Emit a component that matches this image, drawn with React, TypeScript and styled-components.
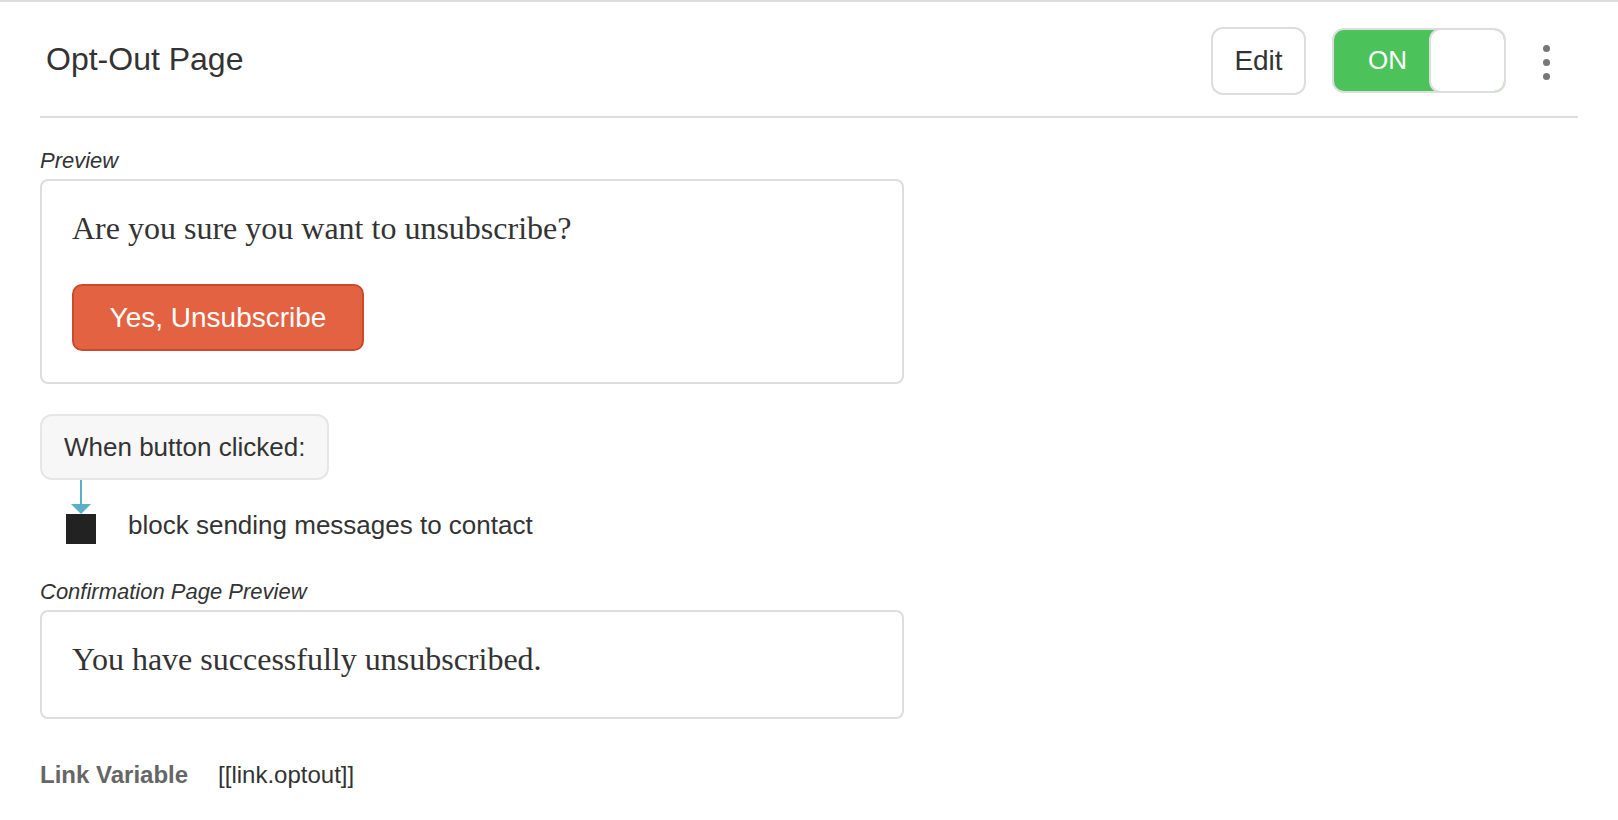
import styled, { createGlobalStyle } from 'styled-components'

const GlobalStyle = createGlobalStyle`
  body {
    margin: 0;
    background: #fff;
    font-family: 'Liberation Sans', Arial, sans-serif;
    color: #333;
  }
  * {
    box-sizing: border-box;
  }
`

const Page = styled.div`
  border-top: 2px solid #ddd;
  padding: 0 40px 40px;
`

const Header = styled.header`
  display: flex;
  align-items: center;
  height: 116px;
  border-bottom: 2px solid #ddd;
`

const Title = styled.h1`
  flex: 1;
  margin: 0 0 0 6px;
  font-size: 32px;
  font-weight: 400;
  line-height: 36px;
`

const EditButton = styled.button`
  width: 95px;
  height: 68px;
  margin-top: 3px;
  border: 2px solid #ddd;
  border-radius: 12px;
  background: #fff;
  color: #333;
  font-family: inherit;
  font-size: 28px;
  cursor: pointer;
`

const Toggle = styled.div`
  display: flex;
  width: 174px;
  height: 65px;
  margin-left: 26px;
  margin-top: 3px;
  border: 2px solid #ddd;
  border-radius: 12px;
  background: #4cc35a;
  overflow: hidden;
`

const ToggleLabel = styled.span`
  flex: 1;
  display: flex;
  align-items: center;
  justify-content: center;
  padding-left: 12px;
  color: #fff;
  font-size: 26px;
`

const Knob = styled.span`
  width: 77px;
  margin: -2px -2px -2px 0;
  border: 2px solid #ddd;
  border-radius: 12px;
  background: #fff;
`

const Kebab = styled.button`
  display: flex;
  flex-direction: column;
  gap: 7px;
  margin: 6px 28px 0 37px;
  padding: 0;
  border: none;
  background: transparent;
  cursor: pointer;
  span {
    width: 7px;
    height: 7px;
    border-radius: 50%;
    background: #777;
  }
`

const SectionLabel = styled.div<{ $top: number }>`
  margin: ${(p) => p.$top}px 0 5px;
  font-size: 22px;
  font-style: italic;
  line-height: 26px;
`

const PreviewBox = styled.div<{ $bottom: number }>`
  width: 864px;
  padding: 27px 30px ${(p) => p.$bottom}px;
  border: 2px solid #ddd;
  border-radius: 8px;
`

const PreviewText = styled.p<{ $gap?: number }>`
  margin: 0 0 ${(p) => p.$gap || 0}px;
  font-family: 'Liberation Serif', 'Times New Roman', serif;
  font-size: 32px;
  line-height: 40px;
  color: #333;
`

const UnsubscribeButton = styled.button`
  display: block;
  width: 292px;
  height: 67px;
  border: 2px solid #c94a2d;
  border-radius: 10px;
  background: #e36241;
  color: #fff;
  font-family: 'Liberation Sans', Arial, sans-serif;
  font-size: 28px;
  cursor: pointer;
`

const TriggerBox = styled.div`
  display: inline-block;
  margin-top: 30px;
  padding: 0 22px;
  height: 66px;
  line-height: 62px;
  border: 2px solid #e6e6e6;
  border-radius: 12px;
  background: #f7f7f7;
  font-size: 26px;
`

const ActionRow = styled.div`
  display: flex;
  gap: 32px;
  padding-left: 26px;
`

const Connector = styled.div`
  display: flex;
  flex-direction: column;
  align-items: center;
  width: 30px;
`

const Stem = styled.span`
  width: 2px;
  height: 24px;
  background: #5aaec8;
`

const ArrowHead = styled.span`
  width: 0;
  height: 0;
  border-left: 10px solid transparent;
  border-right: 10px solid transparent;
  border-top: 10px solid #5aaec8;
`

const ActionIcon = styled.span`
  width: 30px;
  height: 30px;
  background: #222;
`

const ActionText = styled.span`
  align-self: flex-end;
  margin-bottom: 4px;
  font-size: 26px;
  line-height: 30px;
`

const VariableRow = styled.div`
  display: flex;
  gap: 30px;
  margin-top: 42px;
  font-size: 24px;
  line-height: 28px;
`

const VariableName = styled.span`
  font-weight: 700;
  color: #666;
`

export default function App() {
  return (
    <Page>
      <GlobalStyle />
      <Header>
        <Title>Opt-Out Page</Title>
        <EditButton type='button'>Edit</EditButton>
        <Toggle>
          <ToggleLabel>ON</ToggleLabel>
          <Knob />
        </Toggle>
        <Kebab type='button' aria-label='more'>
          <span />
          <span />
          <span />
        </Kebab>
      </Header>

      <SectionLabel $top={30}>Preview</SectionLabel>
      <PreviewBox $bottom={31}>
        <PreviewText $gap={36}>Are you sure you want to unsubscribe?</PreviewText>
        <UnsubscribeButton type='button'>Yes, Unsubscribe</UnsubscribeButton>
      </PreviewBox>

      <TriggerBox>When button clicked:</TriggerBox>
      <ActionRow>
        <Connector>
          <Stem />
          <ArrowHead />
          <ActionIcon />
        </Connector>
        <ActionText>block sending messages to contact</ActionText>
      </ActionRow>

      <SectionLabel $top={35}>Confirmation Page Preview</SectionLabel>
      <PreviewBox $bottom={38}>
        <PreviewText>You have successfully unsubscribed.</PreviewText>
      </PreviewBox>

      <VariableRow>
        <VariableName>Link Variable</VariableName>
        <span>[[link.optout]]</span>
      </VariableRow>
    </Page>
  )
}
